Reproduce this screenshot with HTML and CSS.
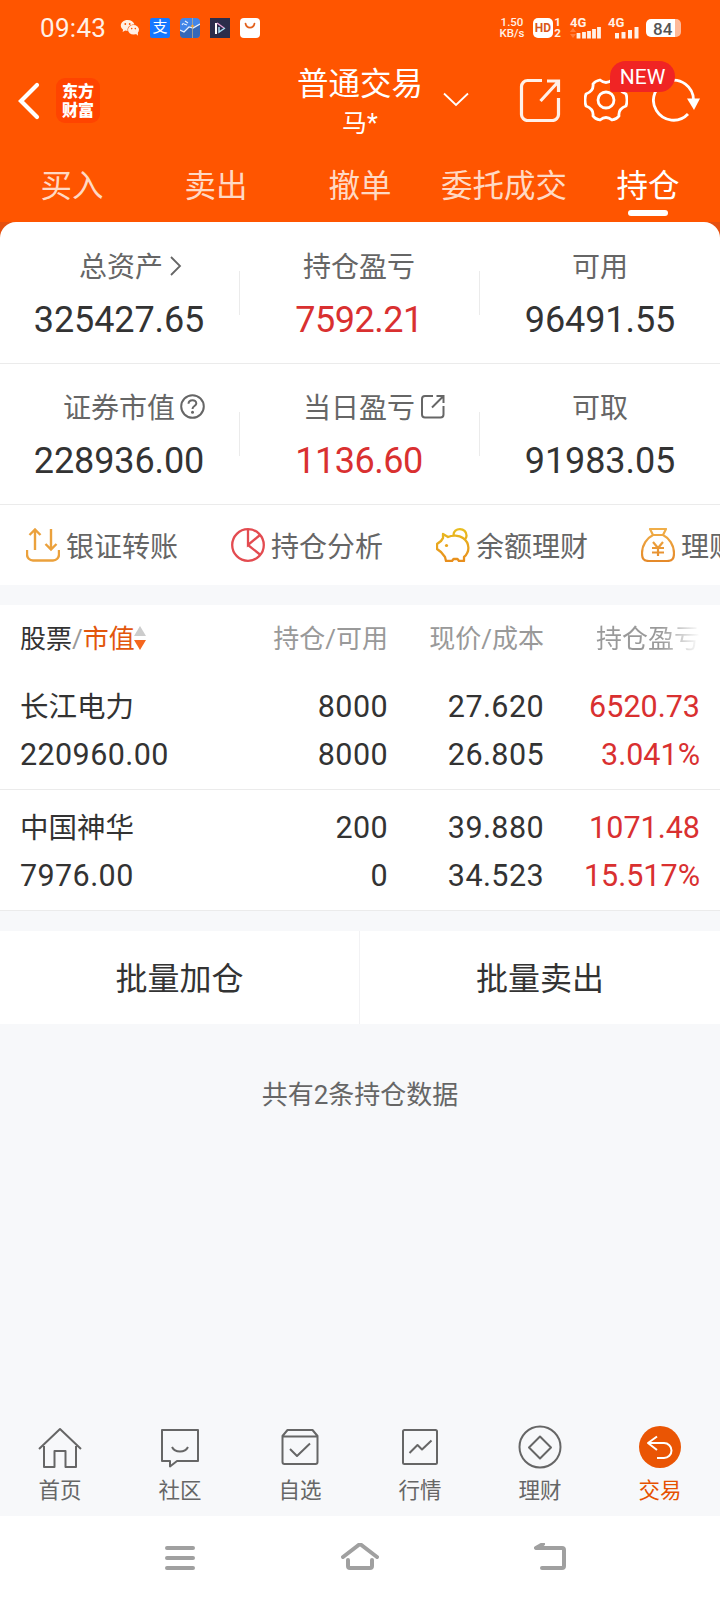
FILE: index.html
```html
<!doctype html>
<html lang="zh-CN">
    <head>
        <meta charset="UTF-8" />
        <meta name="viewport" content="width=device-width, initial-scale=1.0" />
        <title>普通交易 - 持仓</title>
        <link rel="stylesheet" href="styles.css">
    </head>
    <body>
        <header class="top">
            <div class="status-bar">
                <span class="clock">09:43</span>
                <div class="app-icons">
                    <svg width="20" height="20" viewBox="0 0 20 20">
                        <path fill="#fff0e6" d="M7.500 2C3.600 2 .8 4.500.8 7.500c0 1.800 1 3.200 2.300 4.200L2.600 14l2.600-1.400 2.400.4C7 9 10 6.300 14.500 6.500 13.800 3.800 11 2 7.500 2z" />
                        <ellipse fill="#fff0e6" cx="13.500" cy="11.800" rx="5.500" ry="4.800" />
                        <path fill="#fff0e6" d="M15 15l3 2.800-.3-4z" />
                        <circle cx="5.300" cy="6" r=".9" fill="#ff5500" /><circle cx="9.700" cy="6" r=".9" fill="#ff5500" />
                        <circle cx="11.700" cy="10.600" r=".8" fill="#ff5500" /><circle cx="15.300" cy="10.600" r=".8" fill="#ff5500" />
                    </svg>
                    <span class="alipay">支</span>
                    <svg width="20" height="20" viewBox="0 0 20 20">
                        <rect width="20" height="20" rx="4" fill="#4285e8" />
                        <path d="M0 13l4 1 5-5 4 1 7-4v10a4 4 0 0 1-4 4H4a4 4 0 0 1-4-4z" fill="#3568b8" />
                        <path d="M0 12l4 2 5-5 4 1 7-4M2 7l1.500-2M5 3l3 2M4 6l3 1" fill="none" stroke="#e8f1ff" stroke-width="1.200" />
                        <path d="M12.500 0v20" stroke="#b9a98a" stroke-width=".8" /><circle cx="12.500" cy="8" r="1.300" fill="#f7a52c" />
                    </svg>
                    <svg width="20" height="20" viewBox="0 0 20 20">
                        <rect width="20" height="20" fill="#2b2d4b" />
                        <path d="M6 5v11" stroke="#fff" stroke-width="2" />
                        <path d="M7 5l7 5" stroke="#e7a2d8" stroke-width="1.500" />
                        <path d="M15 10l-6 4V9" fill="none" stroke="#a8ddf2" stroke-width="1.500" />
                    </svg>
                    <svg width="20" height="20" viewBox="0 0 20 20">
                        <rect width="20" height="20" rx="4" fill="#fff" />
                        <path d="M5.500 5.500c1 5.500 8 5.500 9 0" fill="none" stroke="#e2601c" stroke-width="1.700" stroke-linecap="round" />
                    </svg>
                </div>
                <div class="signals">
                    <div class="speed"><span>1.50</span><span>KB/s</span></div>
                    <span class="hd">HD</span>
                    <div class="sim"><span>1</span><span>2</span></div>
                    <div class="signal">
                        <span>4G</span>
                        <svg width="31" height="12" viewBox="0 0 31 12"><path d="M0 5l3-4 3 4zM0 7l3 4 3-4z" fill="#ff7d3c" /><path d="M8.500 6v5.500M14 5v6.500M19 4v7.500M24 2v9.500M29 0v11.500" stroke="#fff0e6" stroke-width="3.800" /></svg>
                    </div>
                    <div class="signal">
                        <span>4G</span>
                        <svg width="31" height="12" viewBox="0 0 31 12"><path d="M9 6v5.500M15.500 5v6.500M22 3v8.500M28.500 0v11.500" stroke="#fff0e6" stroke-width="4" /></svg>
                    </div>
                    <div class="battery"><span>84</span></div>
                </div>
            </div>

            <div class="title-bar">
                <div class="title-left">
                    <svg width="22" height="38" viewBox="0 0 22 38"><path d="M19 3L3 19l16 16" fill="none" stroke="#fff" stroke-width="4.200" stroke-linecap="round" /></svg>
                    <div class="logo"><span>东方</span><span>财富</span></div>
                </div>
                <div class="title">
                    <h1>普通交易</h1>
                    <p>马*</p>
                </div>
                <div class="title-right">
                    <svg class="arrow" width="26" height="16" viewBox="0 0 26 16"><path d="M1 1.500l12 11.500 12-11.500" fill="none" stroke="#fff" stroke-width="1.800" /></svg>
                    <svg width="42" height="44" viewBox="0 0 42 44"><path d="M23 2.500H8.500a6 6 0 0 0-6 6v28a6 6 0 0 0 6 6h25a6 6 0 0 0 6-6V20M21.500 23L39 4M28 3h11.500V14" fill="none" stroke="#fff0e8" stroke-width="3.200" /></svg>
                    <div class="settings">
                        <svg width="44" height="44" viewBox="0 0 44 44">
                            <path d="M16 2Q22 7 28 2Q33 3 35 6Q34 13 42 16Q44 22 42 28Q34 31 35 38Q33 41 28 42Q22 37 16 42Q11 41 9 38Q10 31 2 28Q0 22 2 16Q10 13 9 6Q11 3 16 2Z" fill="none" stroke="#fff" stroke-width="2.800" stroke-linejoin="round" />
                            <circle cx="22" cy="22" r="8" fill="none" stroke="#fff" stroke-width="2.800" />
                        </svg>
                        <span class="badge">NEW</span>
                    </div>
                    <svg width="48" height="44" viewBox="0 0 48 44"><path d="M36 36A20 20 0 1 1 41.500 22" fill="none" stroke="#fff" stroke-width="2.800" /><path d="M35 20.500h13L42 32z" fill="#fff" /></svg>
                </div>
            </div>

            <nav class="tabs">
                <a>买入</a>
                <a>卖出</a>
                <a>撤单</a>
                <a>委托成交</a>
                <a class="active">持仓</a>
            </nav>
        </header>

        <div class="summary-wrap">
        <section class="summary">
            <div class="asset">
                <div class="label">总资产<svg class="more" width="12" height="22" viewBox="0 0 12 22"><path d="M1 2l9 9-9 9" fill="none" stroke="#666" stroke-width="1.800" /></svg></div>
                <div class="value">325427.65</div>
            </div>
            <div class="asset">
                <div class="label">持仓盈亏</div>
                <div class="value red">7592.21</div>
            </div>
            <div class="asset">
                <div class="label">可用</div>
                <div class="value">96491.55</div>
            </div>
            <div class="asset">
                <div class="label">证券市值<svg class="tip" width="25" height="25" viewBox="0 0 25 25"><g fill="none" stroke="#666" stroke-width="2"><circle cx="12.500" cy="12.500" r="11.300" /><path d="M8.500 9.800c.2-5 8-4.600 7.800-.2-.2 2.500-3.800 2.500-3.800 5.400" /></g><circle cx="12.500" cy="18.300" r="1.500" fill="#666" /></svg></div>
                <div class="value">228936.00</div>
            </div>
            <div class="asset">
                <div class="label">当日盈亏<svg class="tip" width="25" height="25" viewBox="0 0 25 25"><path d="M13 2H5a3 3 0 0 0-3 3v15.500a3 3 0 0 0 3 3h15.500a3 3 0 0 0 3-3V12M12 13.500L23 2.500M16.500 2h7v7" fill="none" stroke="#666" stroke-width="2" /></svg></div>
                <div class="value red">1136.60</div>
            </div>
            <div class="asset">
                <div class="label">可取</div>
                <div class="value">91983.05</div>
            </div>
        </section>
        </div>

        <section class="links">
            <a>
                <svg width="34" height="34" viewBox="0 0 34 34"><path d="M9 22V2M3.500 7L9 1.500 14.500 7M25 1v20M19.500 16l5.500 5.500 5.500-5.500M1 22v4.500a6 6 0 0 0 6 6h20a6 6 0 0 0 6-6V22" fill="none" stroke="#eba13c" stroke-width="2.400" /></svg>
                <span>银证转账</span>
            </a>
            <a>
                <svg width="34" height="34" viewBox="0 0 34 34"><g fill="none" stroke="#e34b50" stroke-width="2.300"><circle cx="17" cy="17" r="15.800" /><path d="M17 1v16l12-10M17 17l12.500 10" /></g></svg>
                <span>持仓分析</span>
            </a>
            <a>
                <svg width="34" height="34" viewBox="0 0 34 34">
                    <defs><linearGradient id="gold" x1="0" y1="0" x2="0" y2="1"><stop offset="0" stop-color="#e8bd20" /><stop offset="1" stop-color="#e88e1c" /></linearGradient></defs>
                    <path d="M7 6l5 3c4-2 11-2 15 1 7 5 7 14 1 19v4h-5l-1.500-2h-4L16 33h-6l-1-4-4-5-4-3v-5l4-3 2-3zM17.500 7.500C17-1 31-1 30.500 8c0 2-1 3-2 4" fill="none" stroke="url(#gold)" stroke-width="2.300" stroke-linejoin="round" />
                    <circle cx="10.500" cy="17.500" r="1.600" fill="#e8a41c" />
                </svg>
                <span>余额理财</span>
            </a>
            <a>
                <svg width="34" height="34" viewBox="0 0 34 34">
                    <defs><linearGradient id="amber" x1="0" y1="0" x2="0" y2="1"><stop offset="0" stop-color="#f0ae48" /><stop offset="1" stop-color="#e58a2a" /></linearGradient></defs>
                    <path d="M9 1h16l-3 6H12zM12 7C6 10 1 17 1 25c0 5 1 8 7 8h18c6 0 7-3 7-8 0-8-5-15-11-18M12 14l5 6 5-6M11 20h12M11 24.500h12M17 20v8" fill="none" stroke="url(#amber)" stroke-width="2.200" stroke-linejoin="round" />
                </svg>
                <span>理财</span>
            </a>
        </section>

        <section class="holdings">
            <div class="row head">
                <div class="sort"><span class="stock">股票</span>/<span class="market">市值</span><svg width="12" height="24" viewBox="0 0 12 24"><path d="M0 10L6 0l6 10z" fill="#ccc" /><path d="M0 14h12l-6 10z" fill="#f5661e" /></svg></div>
                <div>持仓/可用</div>
                <div>现价/成本</div>
                <div class="fade">持仓盈亏</div>
            </div>
            <div class="row">
                <div><span class="name">长江电力</span><span>220960.00</span></div>
                <div><span>8000</span><span>8000</span></div>
                <div><span>27.620</span><span>26.805</span></div>
                <div class="red"><span>6520.73</span><span>3.041%</span></div>
            </div>
            <div class="row">
                <div><span class="name">中国神华</span><span>7976.00</span></div>
                <div><span>200</span><span>0</span></div>
                <div><span>39.880</span><span>34.523</span></div>
                <div class="red"><span>1071.48</span><span>15.517%</span></div>
            </div>
        </section>

        <div class="batch">
            <button>批量加仓</button>
            <button>批量卖出</button>
        </div>

        <p class="total">共有2条持仓数据</p>

        <nav class="bottom-nav">
            <a>
                <svg viewBox="0 0 44 44"><path d="M1 22L22 2l21 20M6 19v21h10.500V24h11v16H38V19" /></svg>
                首页
            </a>
            <a>
                <svg viewBox="0 0 44 44"><path d="M4 3h36v31H19l-7 5.500V34H4zM14 20c3 6 13 6 16 0" /></svg>
                社区
            </a>
            <a>
                <svg viewBox="0 0 44 44"><path d="M4.500 9l5-6h25l5 6v26a2 2 0 0 1-2 2h-31a2 2 0 0 1-2-2zM5 9.500h34M12 22l7 7 13-12.500" /></svg>
                自选
            </a>
            <a>
                <svg viewBox="0 0 44 44"><rect x="5" y="3" width="34" height="34" rx="1.500" /><path d="M11.500 26l8-8 4.500 4.500 9.500-9" /></svg>
                行情
            </a>
            <a>
                <svg viewBox="0 0 44 44"><circle cx="22" cy="20" r="20.500" /><path d="M22 9.500L33 20.500l-11 11-11-11z" /></svg>
                理财
            </a>
            <a class="active">
                <svg viewBox="0 0 44 44"><circle class="disc" cx="22" cy="20" r="21" /><path d="M19 9.500l-9 6.500 9 7M10 16h16a7.500 7.500 0 0 1 0 15h-7" /></svg>
                交易
            </a>
        </nav>

        <div class="system-nav">
            <svg width="30" height="30" viewBox="0 0 30 30"><path d="M2 5h26M2 15h26M2 25h26" /></svg>
            <svg width="38" height="30" viewBox="0 0 38 30"><path d="M2 14L19 1l17 13M7 17v6a2 2 0 0 0 2 2h20a2 2 0 0 0 2-2v-6" /></svg>
            <svg width="32" height="30" viewBox="0 0 32 30"><path d="M9 1L2 5h26a2 2 0 0 1 2 2v16a2 2 0 0 1-2 2H8" /></svg>
        </div>
    </body>
</html>
```
FILE: styles.css
```css
:root {
    --orange: #ff5500;
    --red: #d93030;
    --text: #333;
    --gray: #666;
    --line: #ebebeb;
    --page: #f7f8fa;
}
* {
    box-sizing: border-box;
}
body {
    margin: 0;
    height: 1600px;
    display: flex;
    flex-direction: column;
    background: var(--page);
    color: var(--text);
    font-family: Roboto, "Noto Sans CJK SC", sans-serif;
    overflow: hidden;
}
svg {
    display: block;
    flex: none;
}
h1, p {
    margin: 0;
    font-weight: 400;
}
.red {
    color: var(--red);
}

/* header */
.top {
    height: 222px;
    background: var(--orange);
    color: #fff;
}
.status-bar {
    height: 56px;
    padding: 0 40px;
    display: flex;
    align-items: center;
    color: #fff0e6;
}
.clock {
    width: 80px;
    font-size: 26px;
    letter-spacing: 0.3px;
}
.app-icons {
    display: flex;
    gap: 10px;
}
.alipay {
    width: 20px;
    height: 20px;
    background: #1677ff;
    border-radius: 2px;
    color: #fff;
    font-size: 15px;
    line-height: 19px;
    text-align: center;
}
.signals {
    margin-left: auto;
    display: flex;
    align-items: center;
    font-weight: 700;
}
.speed, .sim {
    display: flex;
    flex-direction: column;
    align-items: center;
    font-size: 11.5px;
    line-height: 11px;
    font-weight: 500;
}
.speed {
    width: 26px;
    margin-right: 8px;
}
.hd {
    width: 20px;
    height: 20px;
    border-radius: 5px;
    background: #fff;
    color: #d9561a;
    font-size: 12px;
    line-height: 20px;
    text-align: center;
}
.sim {
    width: 9px;
    margin-right: 8px;
    font-weight: 700;
}
.signal {
    width: 31px;
    height: 20px;
    margin-right: 7px;
    font-size: 13px;
    line-height: 9px;
}
.signal span {
    display: block;
}
.battery {
    width: 35px;
    height: 18px;
    margin-right: -1px;
    border-radius: 5px;
    background: linear-gradient(to right, #fff 29px, #ffb999 29px);
    color: #555;
    font-size: 17px;
    font-weight: 500;
    line-height: 20px;
    padding-left: 7px;
}
.title-bar {
    height: 88px;
    display: grid;
    grid-template-columns: 296px 128px 296px;
    align-items: center;
}
.title-left, .title-right {
    display: flex;
    align-items: center;
}
.title-left {
    padding: 1px 0 0 18px;
    gap: 16px;
}
.logo {
    width: 44px;
    height: 45px;
    border-radius: 9px;
    background: #ff4400;
    display: flex;
    flex-direction: column;
    align-items: center;
    justify-content: center;
    font-size: 16px;
    line-height: 19px;
    font-weight: 900;
}
.title {
    text-align: center;
    padding-top: 6px;
    white-space: nowrap;
}
.title h1 {
    font-size: 31.5px;
    line-height: 42px;
}
.title p {
    font-size: 25px;
    line-height: 36px;
}
.title-right {
    padding: 0 20px 0 19px;
}
.title-right .arrow {
    margin-right: 50px;
}
.settings {
    position: relative;
    margin: 0 24px 0 23px;
}
.badge {
    position: absolute;
    left: 26px;
    top: -17px;
    width: 65px;
    height: 31px;
    border-radius: 16px 16px 16px 3px;
    background: #f02424;
    font-size: 21px;
    line-height: 33px;
    text-align: center;
}
.tabs {
    display: grid;
    grid-template-columns: repeat(5, 1fr);
    height: 78px;
}
.tabs a {
    display: flex;
    flex-direction: column;
    align-items: center;
    font-size: 31.5px;
    line-height: 46px;
    padding-top: 20px;
    color: #ffd9c4;
}
.tabs .active {
    color: #fff;
}
.tabs .active::after {
    content: "";
    width: 40px;
    height: 6px;
    border-radius: 3px;
    background: #fff;
}

/* account summary */
.summary-wrap {
    background: #e5500f;
}
.summary {
    display: grid;
    grid-template-columns: repeat(3, 240px);
    grid-template-rows: 142px 141px;
    background: #fff;
    border-radius: 16px 16px 0 0;
}
.asset {
    display: flex;
    flex-direction: column;
    align-items: center;
    padding: 26px 2px 0 0;
    border-bottom: 1px solid var(--line);
    background: linear-gradient(var(--line), var(--line)) right 49px / 1px 44px no-repeat;
}
.asset:nth-child(n+4) {
    padding-top: 25px;
    background-position: right 48px;
}
.asset:nth-child(3n) {
    padding-right: 0;
    background: none;
}
.label {
    display: flex;
    align-items: center;
    color: var(--gray);
    font-size: 28px;
    line-height: 40px;
}
.label .more {
    margin: -4px -23px 0 7px;
}
.label .tip {
    margin: -6px -30px 0 5px;
}
.value {
    margin-top: 11px;
    font-size: 36px;
    line-height: 42px;
    letter-spacing: -0.1px;
}
.value.red {
    letter-spacing: -0.5px;
}

/* shortcuts */
.links {
    height: 80px;
    padding-left: 26px;
    display: flex;
    align-items: center;
    background: #fff;
    overflow: hidden;
    flex: none;
}
.links a {
    flex: none;
    width: 205px;
    display: flex;
    align-items: center;
    gap: 6px;
    color: var(--gray);
    font-size: 28px;
    line-height: 40px;
}
.links span {
    padding-top: 5px;
}

/* holdings table */
.holdings {
    margin-top: 20px;
    background: #fff;
}
.row {
    height: 121px;
    padding: 14px 20px 0;
    display: grid;
    grid-template-columns: 212px 156px 156px 156px;
    border-bottom: 1px solid var(--line);
    text-align: right;
    font-size: 30.5px;
    line-height: 48px;
    letter-spacing: 0.4px;
}
.row > div:first-child {
    text-align: left;
}
.row > div > span {
    display: block;
    height: 48px;
}
.row .name {
    padding-top: 1px;
    font-size: 28.5px;
    letter-spacing: 0;
}
.row .red {
    letter-spacing: 0;
}
.row.head {
    height: 64px;
    padding-top: 14px;
    border-bottom: 0;
    color: #999;
    font-size: 26px;
    line-height: 40px;
    letter-spacing: 0;
}
.row .sort {
    display: flex;
    align-items: center;
    height: 40px;
}
.row .sort span {
    height: 40px;
}
.row .sort svg {
    margin: -3px 0 0 -1px;
}
.fade {
    background: linear-gradient(to right, #999 75%, #fff 100%);
    background-clip: text;
    color: transparent;
}
.stock {
    color: var(--text);
}
.market {
    color: #e2560c;
}

.batch {
    display: flex;
    height: 93px;
    margin-top: 20px;
    background: #fff;
}
.batch button {
    width: 359px;
    padding: 0 0 4px;
    border: 0;
    background: none;
    color: var(--text);
    font: 32px Roboto, "Noto Sans CJK SC", sans-serif;
}
.batch button + button {
    width: 361px;
    border-left: 1px solid #f2f2f4;
}
.total {
    margin-top: 51px;
    text-align: center;
    color: var(--gray);
    font-size: 26px;
    line-height: 40px;
}

/* bottom bars */
.bottom-nav {
    margin-top: auto;
    height: 91px;
    display: grid;
    grid-template-columns: repeat(6, 1fr);
}
.bottom-nav a {
    display: flex;
    flex-direction: column;
    align-items: center;
    color: var(--gray);
    font-size: 21.5px;
    line-height: 30px;
    gap: 5px;
}
.bottom-nav svg {
    width: 44px;
    height: 44px;
    margin-top: 2px;
    overflow: visible;
    fill: none;
    stroke: #666;
    stroke-width: 2;
    stroke-linejoin: round;
}
.bottom-nav .active {
    color: #e65100;
}
.bottom-nav .active svg {
    stroke: #fff;
}
.bottom-nav .disc {
    fill: #ea5504;
    stroke: none;
}
.system-nav {
    height: 84px;
    padding: 0 154px 1px 165px;
    display: grid;
    grid-template-columns: 176px 1fr auto;
    align-items: center;
    background: #fff;
}
.system-nav svg {
    fill: none;
    stroke: #a0a0a0;
    stroke-width: 4;
    stroke-linecap: round;
    stroke-linejoin: round;
}
```
